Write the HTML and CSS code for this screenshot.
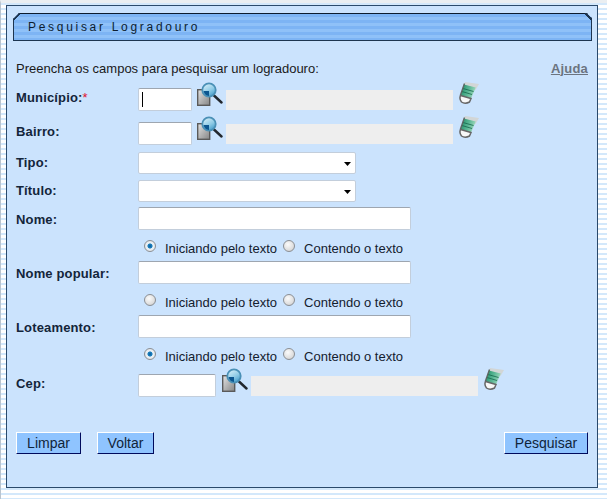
FILE: index.html
```html
<!DOCTYPE html>
<html lang="pt">
<head>
<meta charset="utf-8">
<title>Pesquisar Logradouro</title>
<link rel="stylesheet" href="styles.css">
</head>
<body>
<svg class="defs" width="0" height="0" aria-hidden="true">
  <defs>
    <linearGradient id="lens" x1="0.2" y1="0" x2="0.8" y2="1"><stop offset="0" stop-color="#d8f0f9"/><stop offset="0.55" stop-color="#8fcbe6"/><stop offset="1" stop-color="#3a97c8"/></linearGradient>
    <linearGradient id="doc" x1="0" y1="0" x2="1" y2="1"><stop offset="0" stop-color="#e4e4e4"/><stop offset="1" stop-color="#858585"/></linearGradient>
    <linearGradient id="band" x1="0" y1="0" x2="1" y2="0.3"><stop offset="0" stop-color="#1a8a63"/><stop offset="0.6" stop-color="#5cb896"/><stop offset="1" stop-color="#9ad6ba"/></linearGradient>
    <symbol id="search" viewBox="0 0 26 26">
      <rect x="0.700" y="7.700" width="12" height="15.600" fill="url(#doc)" stroke="#5a5a5a" stroke-width="1.400"/>
      <path d="M17 13.500l7.500 7" stroke="#22272e" stroke-width="2.400" stroke-linecap="round"/>
      <circle cx="12" cy="8" r="6.700" fill="url(#lens)" stroke="#4a90b6" stroke-width="1.800"/>
      <path d="M6.500 9h5.500v5a6.500 6.500 0 0 1-5.500-5z" fill="#0c5690"/>
    </symbol>
    <symbol id="eraser" viewBox="0 0 20 24">
      <path d="M6 1l14 2-3.500 6L4.500 5.500z" fill="#d2d6d6"/>
      <path d="M4.800 3.500l12 3L12 17.500 1.500 14.500z" fill="url(#band)"/>
      <path d="M4 7.500l10.500 3M3 10.500l10 3" stroke="#14664b" stroke-width=".8"/>
      <path d="M5.500 2.500L1.300 14.500" stroke="#5f6662" stroke-width="1.400"/>
      <path d="M1.500 14.500L12 17.500l-1.500 3.500Q6 23.500 2.500 21Q0 18 1.500 14.500z" fill="#f8f8f8" stroke="#666" stroke-width="1.500"/>
    </symbol>
  </defs>
</svg>
<main class="panel">
  <header class="title-bar"><h1>Pesquisar Logradouro</h1></header>
  <div class="intro">
    <span>Preencha os campos para pesquisar um logradouro:</span>
    <a class="help" href="#">Ajuda</a>
  </div>
  <form class="form">
    <div class="row row-lookup">
      <label class="label">Município:<span class="req">*</span></label>
      <div class="caret-box"><input class="input w-code" type="text"><span class="caret"></span></div>
      <svg class="ico-search"><use href="#search"/></svg>
      <input class="input-ro" type="text" readonly>
      <svg class="ico-eraser"><use href="#eraser"/></svg>
    </div>
    <div class="row row-lookup row-bairro">
      <label class="label">Bairro:</label>
      <input class="input w-code" type="text">
      <svg class="ico-search"><use href="#search"/></svg>
      <input class="input-ro" type="text" readonly>
      <svg class="ico-eraser"><use href="#eraser"/></svg>
    </div>
    <div class="row row-select">
      <label class="label">Tipo:</label>
      <div class="select"><svg class="arrow" width="7" height="4"><path d="M0 0h7L3.500 4z"/></svg></div>
    </div>
    <div class="row row-select">
      <label class="label">Título:</label>
      <div class="select"><svg class="arrow" width="7" height="4"><path d="M0 0h7L3.500 4z"/></svg></div>
    </div>
    <div class="row row-text">
      <label class="label">Nome:</label>
      <input class="input w-full" type="text">
    </div>
    <div class="radios">
      <span class="radio on"></span><span class="radio-text">Iniciando pelo texto</span>
      <span class="radio"></span><span class="radio-text">Contendo o texto</span>
    </div>
    <div class="row row-text">
      <label class="label">Nome popular:</label>
      <input class="input w-full" type="text">
    </div>
    <div class="radios">
      <span class="radio"></span><span class="radio-text">Iniciando pelo texto</span>
      <span class="radio"></span><span class="radio-text">Contendo o texto</span>
    </div>
    <div class="row row-text">
      <label class="label">Loteamento:</label>
      <input class="input w-full" type="text">
    </div>
    <div class="radios">
      <span class="radio on"></span><span class="radio-text">Iniciando pelo texto</span>
      <span class="radio"></span><span class="radio-text">Contendo o texto</span>
    </div>
    <div class="row row-lookup row-cep">
      <label class="label">Cep:</label>
      <input class="input w-cep" type="text">
      <svg class="ico-search"><use href="#search"/></svg>
      <input class="input-ro" type="text" readonly>
      <svg class="ico-eraser"><use href="#eraser"/></svg>
    </div>
    <div class="actions">
      <button class="btn btn-limpar" type="button">Limpar</button>
      <button class="btn btn-voltar" type="button">Voltar</button>
      <button class="btn btn-pesquisar" type="button">Pesquisar</button>
    </div>
  </form>
</main>
</body>
</html>
```
FILE: styles.css
```css
* { box-sizing: border-box; }
html, body { height: 100%; }
body {
  margin: 0;
  padding: 2px 9px 0 5px;
  height: 499px;
  overflow: hidden;
  font-family: "Liberation Sans", Arial, sans-serif;
  font-size: 13px;
  color: #111;
  border-top: 3px solid #eaeef1;
  border-left: 1px solid #b9c4cf;
  background: repeating-linear-gradient(180deg, #fff 0, #fff 3px, #d3e8fb 3px, #d3e8fb 5px);
}
.defs { position: absolute; }
.panel {
  width: 592px;
  height: 483px;
  padding: 7px 5px 0 6px;
  background: #cbe3fd;
  border: 1px solid #2b4a6b;
}
.title-bar {
  position: relative;
  height: 28px;
  padding-left: 14px;
  display: flex;
  align-items: center;
  border: 1px solid #1d3550;
  border-top-color: #0d1c2e;
  clip-path: polygon(6px 0, calc(100% - 5px) 0, 100% 5px, 100% 100%, 0 100%, 0 6px);
  background: repeating-linear-gradient(180deg, #7db4f4 0, #7db4f4 3px, #8fc1f8 3px, #8fc1f8 6px);
}
.title-bar::before,
.title-bar::after {
  content: "";
  position: absolute;
  top: -1px;
  width: 7px;
  height: 7px;
}
.title-bar::before {
  left: -1px;
  background: linear-gradient(135deg, transparent 38%, #1d3550 38%, #1d3550 58%, transparent 58%);
}
.title-bar::after {
  right: -1px;
  background: linear-gradient(225deg, transparent 38%, #1d3550 38%, #1d3550 58%, transparent 58%);
}
.title-bar h1 {
  margin: 0;
  font-size: 12px;
  font-weight: 400;
  letter-spacing: 2.700px;
  color: #0c1d30;
}
.intro {
  display: flex;
  justify-content: space-between;
  align-items: center;
  height: 16px;
  margin-top: 19px;
  padding: 0 4px 0 3px;
  color: #1a1a1a;
}
.help {
  font-weight: 700;
  letter-spacing: .2px;
  color: #6b7480;
  text-decoration: underline;
}
.form { display: flex; flex-direction: column; }
.row { display: flex; align-items: center; padding-left: 3px; }
.row-lookup { height: 25px; margin-top: 11px; }
.row-lookup .label { padding-bottom: 4px; }
.row-bairro { margin-top: 9px; }
.row-select { height: 22px; margin-top: 6px; }
.row-select .label { padding-bottom: 2px; }
.row-text { height: 23px; margin-top: 5px; }
.row-text .label { padding-top: 1px; }
.label {
  width: 122px;
  flex: none;
  font-weight: 700;
  letter-spacing: .15px;
  color: #13253a;
}
.req { color: #e01030; font-weight: 400; }
.input {
  height: 23px;
  padding: 0;
  background: #fff;
  border: 1px solid #c3cedb;
  border-top-color: #9ea6b0;
  border-radius: 2px;
}
.w-code { width: 54px; }
.w-cep { width: 78px; }
.w-full { width: 273px; }
.caret-box { position: relative; display: flex; }
.caret {
  position: absolute;
  left: 4px;
  top: 4px;
  width: 1px;
  height: 15px;
  background: #000;
}
.ico-search { width: 26px; height: 26px; flex: none; margin: -9px 0 0 5px; }
.row-cep .ico-search { margin-left: 6px; }
.input-ro {
  width: 227px;
  height: 20px;
  margin: 1px 0 0 3px;
  padding: 0;
  border: 0;
  background: #eee;
}
.ico-eraser { width: 20px; height: 24px; flex: none; margin: -13px 0 0 6px; }
.select {
  width: 218px;
  height: 22px;
  position: relative;
  background: #fff;
  border: 1px solid #c3cedb;
  border-radius: 2px;
}
.arrow { position: absolute; right: 4px; top: 9px; fill: #000; }
.radios {
  display: flex;
  align-items: center;
  height: 16px;
  margin-top: 10px;
  padding-left: 131px;
}
.row-cep { margin-top: 9px; }
.radio {
  width: 12px;
  height: 12px;
  flex: none;
  margin-top: -4px;
  border-radius: 50%;
  border: 1px solid #8b8f94;
  background: radial-gradient(circle at 40% 35%, #fbfbfb 0, #ddd 65%, #bbb 100%);
}
.radio.on {
  background: radial-gradient(circle, #0a5c9a 0, #1f82c0 30%, #eef3f7 42%, #d5d8dc 100%);
}
.radio-text { margin: 0 6px 0 9px; color: #14202e; }
.actions {
  display: flex;
  gap: 16px;
  margin-top: 34px;
  padding: 0 4px 0 3px;
}
.btn {
  height: 22px;
  padding: 0;
  font: 14px "Liberation Sans", Arial, sans-serif;
  color: #10243a;
  background: #8fc4ff;
  border: 1px solid;
  border-color: #fff #000a5c #000a5c #fff;
}
.btn-limpar { width: 65px; }
.btn-voltar { width: 57px; }
.btn-pesquisar { width: 84px; margin-left: auto; }
```
